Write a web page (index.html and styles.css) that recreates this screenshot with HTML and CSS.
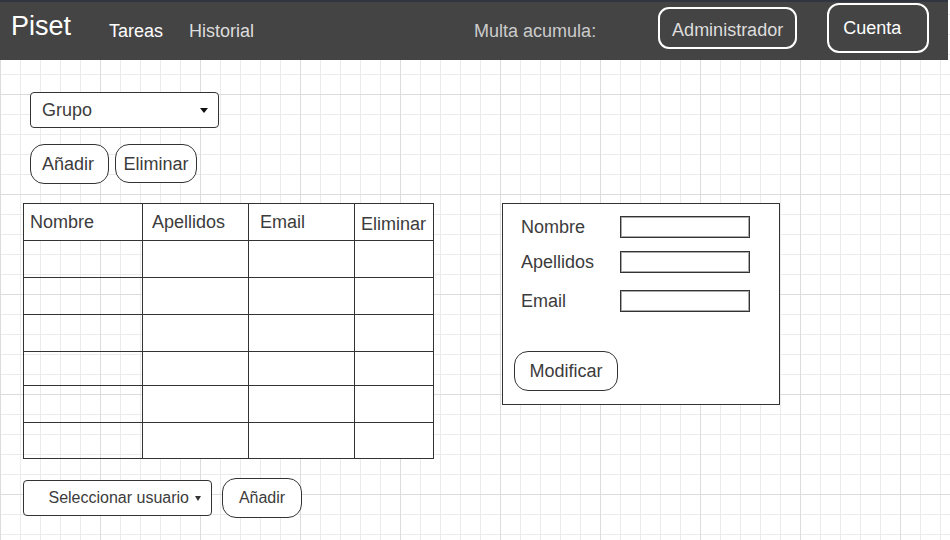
FILE: index.html
```html
<!DOCTYPE html>
<html lang="es">
<head>
    <meta charset="UTF-8">
    <meta name="viewport" content="width=device-width, initial-scale=1.0">
    <title>Piset - Tareas</title>
    <link rel="stylesheet" href="styles.css">
</head>
<body>

    <!-- Top navigation bar -->
    <header class="topbar">
        <span class="brand">Piset</span>
        <a class="nav-link tareas" href="#">Tareas</a>
        <a class="nav-link historial" href="#">Historial</a>
        <span class="fine">Multa acumula:</span>
        <button class="top-btn admin" type="button">Administrador</button>
        <button class="top-btn account" type="button">Cuenta</button>
    </header>

    <main class="board">
        <!-- Group selector -->
        <div class="select group-select">
            <span>Grupo</span>
            <i class="caret"></i>
        </div>

        <div class="actions">
            <button class="btn btn-add" type="button">Añadir</button>
            <button class="btn btn-remove" type="button">Eliminar</button>
        </div>

        <div class="workspace">
            <!-- Members of the group -->
            <table class="users">
                <colgroup>
                    <col class="c-name">
                    <col class="c-last">
                    <col class="c-mail">
                    <col class="c-del">
                </colgroup>
                <thead>
                    <tr class="head">
                        <th class="th-name">Nombre</th>
                        <th class="th-last">Apellidos</th>
                        <th class="th-mail">Email</th>
                        <th class="th-del">Eliminar</th>
                    </tr>
                </thead>
                <tbody>
                    <tr class="r37"><td></td><td></td><td></td><td></td></tr>
                    <tr class="r37"><td></td><td></td><td></td><td></td></tr>
                    <tr class="r37"><td></td><td></td><td></td><td></td></tr>
                    <tr class="r34"><td></td><td></td><td></td><td></td></tr>
                    <tr class="r37"><td></td><td></td><td></td><td></td></tr>
                    <tr class="r36"><td></td><td></td><td></td><td></td></tr>
                </tbody>
            </table>

            <!-- Edit selected user -->
            <form class="edit-panel" onsubmit="return false;">
                <div class="field">
                    <label for="nombre">Nombre</label>
                    <input type="text" id="nombre">
                </div>
                <div class="field">
                    <label for="apellidos">Apellidos</label>
                    <input type="text" id="apellidos">
                </div>
                <div class="field field-email">
                    <label for="email">Email</label>
                    <input type="text" id="email">
                </div>
                <button class="btn btn-edit" type="submit">Modificar</button>
            </form>
        </div>

        <!-- Add a user to the group -->
        <div class="add-bar">
            <div class="select user-select">
                <span>Seleccionar usuario</span>
                <i class="caret caret-sm"></i>
            </div>
            <button class="btn btn-add-user" type="button">Añadir</button>
        </div>
    </main>

</body>
</html>
```

FILE: styles.css
```css
/* General styling */
body {
    margin: 0;
    font-family: "Liberation Sans", Arial, sans-serif;
    color: #3c3c3c;
    background-color: #fff;
    background-image:
        linear-gradient(to right, #dcdcdc 1px, transparent 1px),
        linear-gradient(to bottom, #dcdcdc 1px, transparent 1px),
        linear-gradient(to right, #ebebeb 1px, transparent 1px),
        linear-gradient(to bottom, #ebebeb 1px, transparent 1px);
    background-size: 100px 100px, 100px 100px, 20px 20px, 20px 20px;
    background-position: 0 0, 0 94px, 0 0, 0 14px;
}

button,
input {
    font-family: inherit;
}

/* Header styling */
.topbar {
    display: flex;
    align-items: flex-start;
    width: 948px;
    height: 58px;
    background-color: #444;
    border-top: 2px solid #30353f;
}

.brand {
    font-size: 27px;
    line-height: 1;
    color: #fff;
    margin: 11px 0 0 11px;
}

.nav-link,
.fine {
    font-size: 18px;
    line-height: 1;
    margin-top: 20px;
    text-decoration: none;
}

.tareas {
    color: #fff;
    margin-left: 38px;
}

.historial {
    color: #ddd;
    margin-left: 26px;
}

.fine {
    color: #ccc;
    margin-left: 220px;
}

.top-btn {
    display: block;
    font-size: 18px;
    line-height: 1;
    background: transparent;
    border: 2px solid #fff;
}

.admin {
    width: 139px;
    margin: 5px 0 0 62px;
    padding: 12px 0 8px;
    border-radius: 11px;
    color: #ddd;
    text-align: center;
}

.account {
    width: 102px;
    margin: 1px 0 0 30px;
    padding: 14px 0 14px 14px;
    border-radius: 12px;
    color: #fff;
    text-align: left;
}

/* Selects */
.select {
    display: flex;
    align-items: center;
    box-sizing: border-box;
    width: 189px;
    height: 36px;
    border: 1px solid #333;
    border-radius: 4px;
    background: #fff;
}

.group-select {
    justify-content: space-between;
    margin: 32px 0 0 30px;
    padding: 0 10px 0 11px;
    font-size: 18px;
}

.caret {
    width: 0;
    height: 0;
    border-left: 4.5px solid transparent;
    border-right: 4.5px solid transparent;
    border-top: 5px solid #111;
}

.caret-sm {
    border-left-width: 3.5px;
    border-right-width: 3.5px;
    border-top: 5px solid #333;
}

/* Buttons */
.actions {
    display: flex;
    align-items: flex-start;
    gap: 6px;
    margin: 16px 0 0 30px;
}

.btn {
    font-size: 18px;
    line-height: 1;
    color: #3c3c3c;
    background: #fff;
    border: 1px solid #333;
    border-radius: 14px;
    padding: 10px 0;
    text-align: center;
}

.btn-add {
    width: 79px;
    padding-right: 3px;
}

.btn-remove {
    width: 82px;
    padding: 10px 0 9px;
}

/* Table and edit panel */
.workspace {
    display: flex;
    align-items: flex-start;
    margin-top: 19px;
}

.users {
    margin-left: 23px;
    width: 410px;
    table-layout: fixed;
    border-collapse: collapse;
}

.c-name { width: 119px; }
.c-last { width: 106px; }
.c-mail { width: 106px; }
.c-del { width: 79px; }

.users th,
.users td {
    border: 1px solid #333;
    padding: 0;
    background: #fff;
}

.users td:first-child {
    background: transparent;
}

.users th {
    font-size: 18px;
    font-weight: normal;
    text-align: left;
    color: #3c3c3c;
}

.users .th-name { padding-left: 6px; }
.users .th-last { padding-left: 9px; }
.users .th-mail { padding-left: 11px; }
.users .th-del { padding: 5px 0 0 6px; }

.head,
.r37 { height: 37px; }
.r34 { height: 34px; }
.r36 { height: 36px; }

.edit-panel {
    box-sizing: border-box;
    width: 278px;
    margin: 0 0 0 68px;
    padding: 12px 0 13px;
    border: 1px solid #333;
    background: #fff;
}

.field {
    display: flex;
    align-items: center;
    height: 22px;
    margin-left: 18px;
}

.field + .field {
    margin-top: 13px;
}

.field.field-email {
    margin-top: 17px;
}

.field label {
    width: 99px;
    font-size: 18px;
    line-height: 1;
}

.field input {
    box-sizing: border-box;
    width: 130px;
    height: 22px;
    padding: 0 4px;
    border: 1px solid #333;
    box-shadow: inset 0 0 0 1px #aaa;
    background: #fff;
}

.btn-edit {
    display: block;
    width: 104px;
    margin: 39px 0 0 11px;
}

/* Bottom bar */
.add-bar {
    display: flex;
    align-items: center;
    gap: 10px;
    margin: 19px 0 0 23px;
}

.user-select {
    justify-content: flex-end;
    gap: 6px;
    padding-right: 10px;
    font-size: 16px;
}

.btn-add-user {
    width: 80px;
    padding: 11px 0;
    font-size: 16px;
}
```
